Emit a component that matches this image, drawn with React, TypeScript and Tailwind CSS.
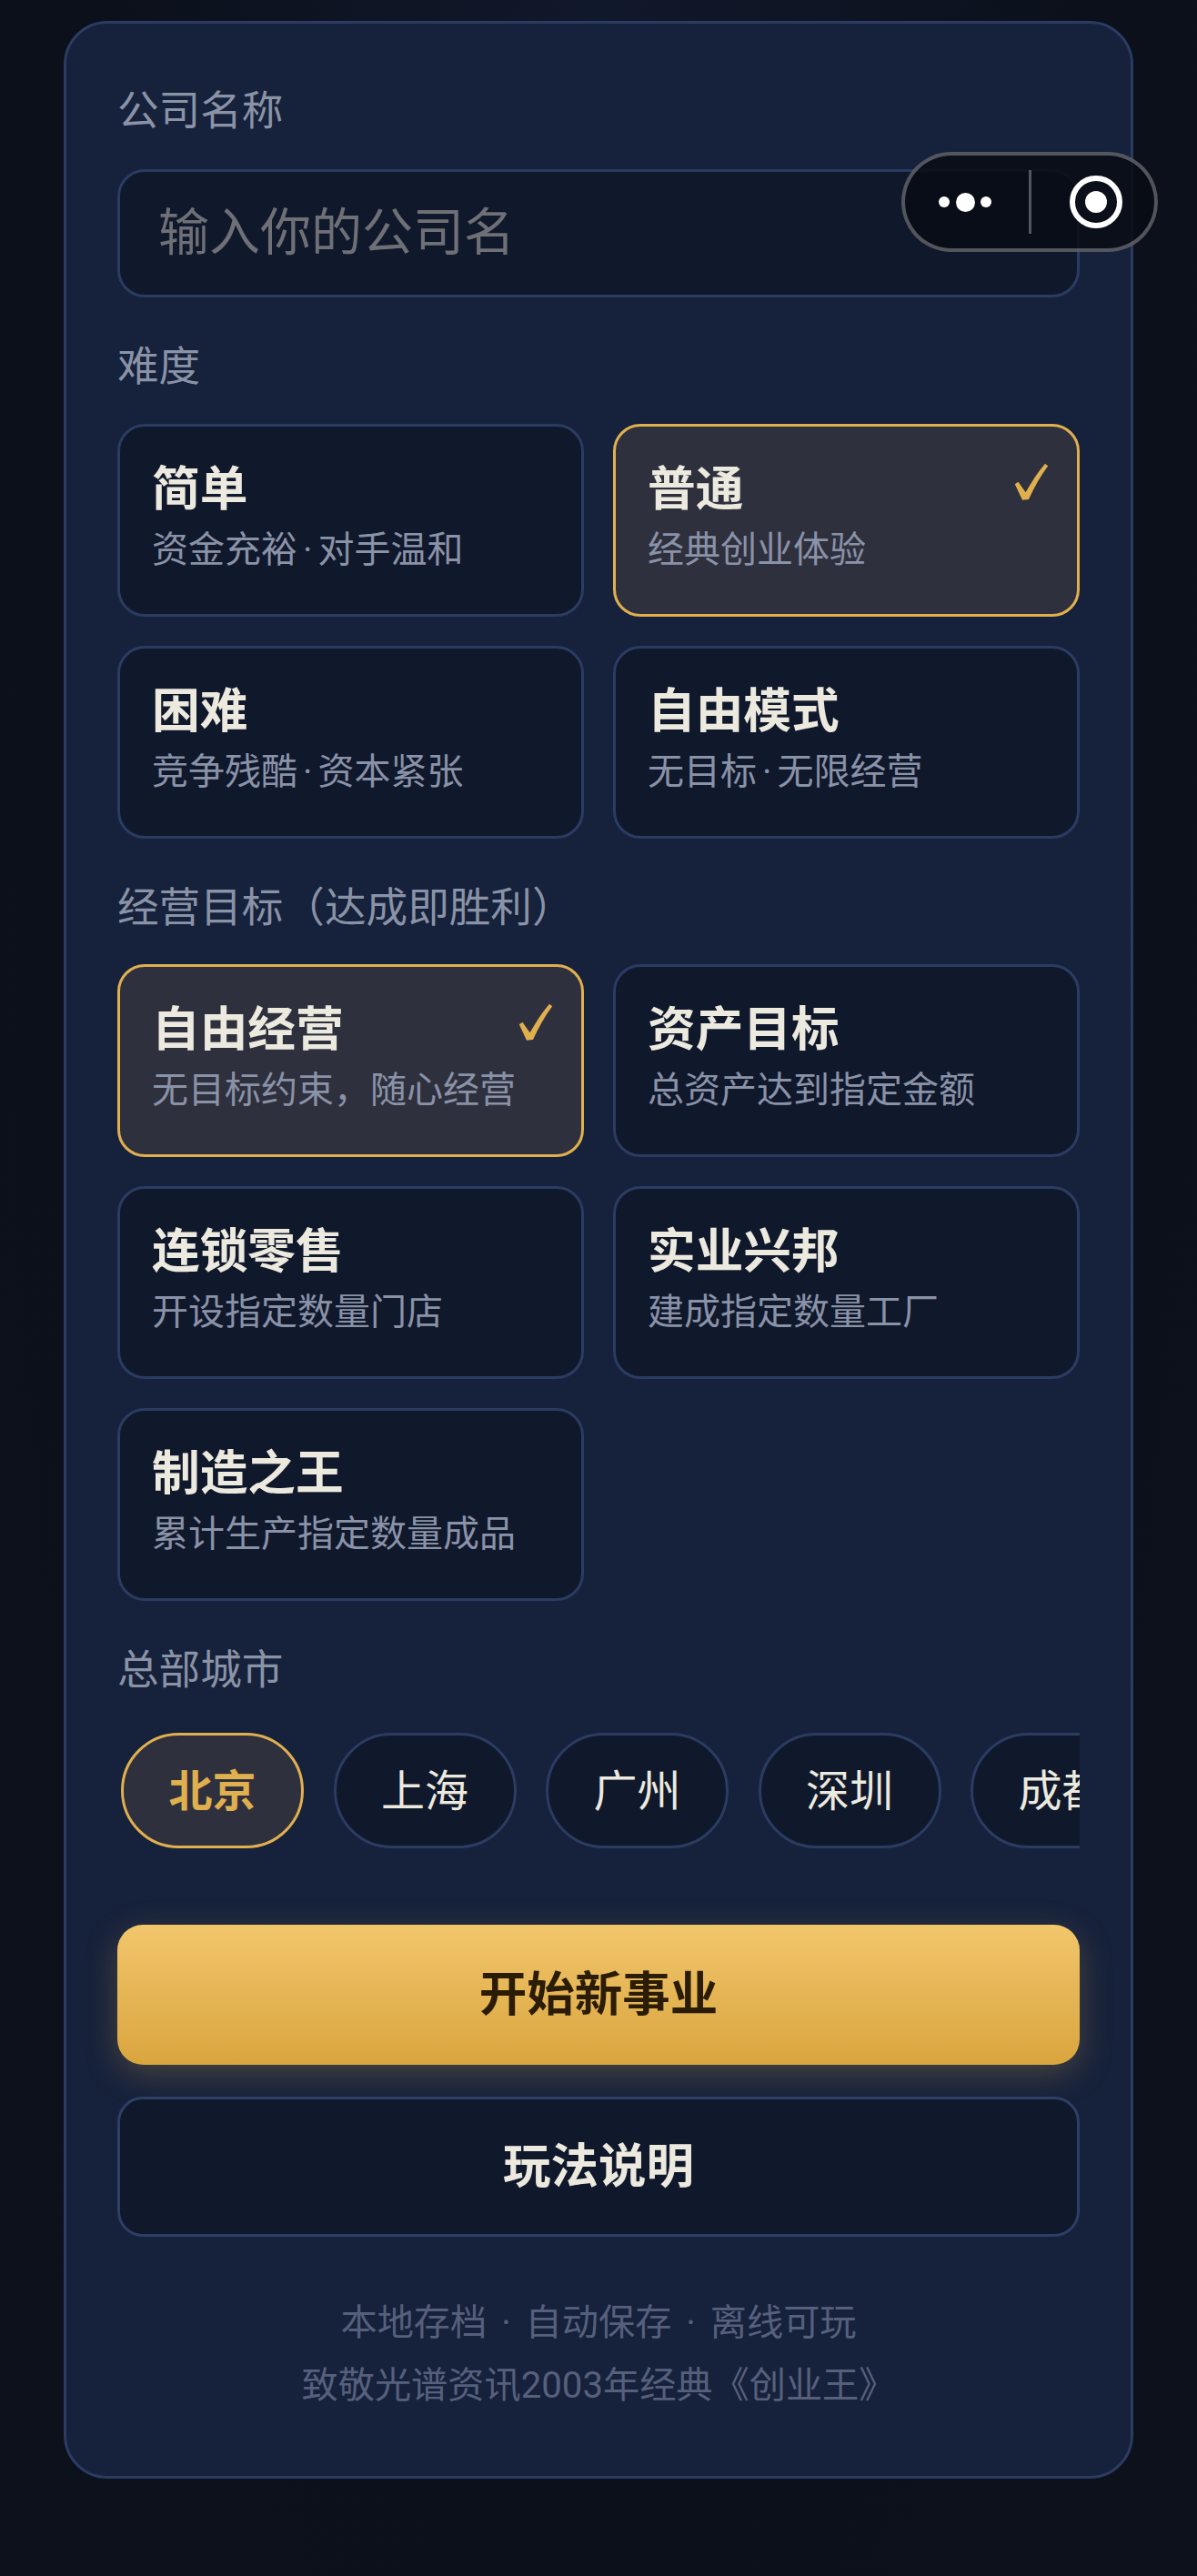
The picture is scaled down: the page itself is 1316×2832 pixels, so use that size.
const difficulties = [
  { name: '简单', desc: ['资金充裕', '对手温和'] },
  { name: '普通', desc: ['经典创业体验'], active: true },
  { name: '困难', desc: ['竞争残酷', '资本紧张'] },
  { name: '自由模式', desc: ['无目标', '无限经营'] },
];

const goals = [
  { name: '自由经营', desc: ['无目标约束，随心经营'], active: true },
  { name: '资产目标', desc: ['总资产达到指定金额'] },
  { name: '连锁零售', desc: ['开设指定数量门店'] },
  { name: '实业兴邦', desc: ['建成指定数量工厂'] },
  { name: '制造之王', desc: ['累计生产指定数量成品'] },
];

const cities = ['北京', '上海', '广州', '深圳', '成都'];

function Label({ children }: { children: React.ReactNode }) {
  return <div className="h-[60px] text-[45.6px] leading-[67px] text-[#8a93a6]">{children}</div>;
}

function OptionCard({ name, desc, active }: { name: string; desc: string[]; active?: boolean }) {
  return (
    <div
      className={`relative h-[212px] rounded-[30px] border-[3px] pl-[35px] pt-[34px] ${
        active ? 'border-[#e0b04f] bg-[#2f303d]' : 'border-[#2b3b62] bg-[#10182b]'
      }`}
    >
      <div className="h-[70px] text-[52.7px] font-bold leading-[70px] text-[#ece9df]">{name}</div>
      <div className="h-[64px] text-[40px] leading-[64px] text-[#8a92a8]">
        {desc[0]}
        {desc[1] && <span className="mx-[6px]">·</span>}
        {desc[1]}
      </div>
      {active && (
        <svg className="absolute right-[30px] top-[40px] h-[42px] w-[40px]" viewBox="0 0 40 42">
          <path
            d="M1.8 23.3 L5.4 20.7 L13.6 32.3 C20 21 27 10 35 .7 L38.2 3.3 C30 14 23 27 17 40 L10 40.7 Z"
            fill="#e0b04f"
          />
        </svg>
      )}
    </div>
  );
}

function CapsuleMenu() {
  return (
    <div className="absolute left-[991px] top-[167px] flex h-[110px] w-[282px] items-center rounded-full border-[4px] border-[#ffffff4d] bg-[#080c14d9]">
      <div className="mr-[4px] flex w-[132px] items-center justify-center gap-[6.5px]">
        <span className="h-[12px] w-[12px] rounded-full bg-white" />
        <span className="h-[21px] w-[21px] rounded-full bg-white" />
        <span className="h-[12px] w-[12px] rounded-full bg-white" />
      </div>
      <div className="h-[70px] w-[3px] bg-[#ffffff4d]" />
      <div className="flex flex-1 items-center justify-center pl-[6px]">
        <div className="flex h-[58px] w-[58px] items-center justify-center rounded-full border-[6px] border-white">
          <span className="h-[24px] w-[24px] rounded-full bg-white" />
        </div>
      </div>
    </div>
  );
}

export default function App() {
  return (
    <div className="relative h-[2832px] w-[1316px] overflow-hidden bg-[radial-gradient(ellipse_at_50%_0%,#10182b_0%,#0b101a_60%,#0c111c_100%)] pt-[23px] font-['Roboto','Noto_Sans_CJK_SC',sans-serif]">
      <div className="mx-[70px] h-[2702px] rounded-[48px] border-[3px] border-[#2b3b62] bg-[#16213b] px-[56px] pt-[63px]">
        <Label>公司名称</Label>
        <input
          className="mt-[37px] block h-[141px] w-full rounded-[30px] border-[3px] border-[#2b3b62] bg-[#10182b] pb-[2px] pl-[42px] text-[56px] text-[#ece9df] outline-none placeholder:text-[#6e7076]"
          placeholder="输入你的公司名"
        />

        <div className="mt-[43px]">
          <Label>难度</Label>
        </div>
        <div className="mt-[36px] grid grid-cols-2 gap-[32px]">
          {difficulties.map((d) => (
            <OptionCard key={d.name} {...d} />
          ))}
        </div>

        <div className="mt-[43px]">
          <Label>经营目标（达成即胜利）</Label>
        </div>
        <div className="mt-[35px] grid grid-cols-2 gap-[32px]">
          {goals.map((g) => (
            <OptionCard key={g.name} {...g} />
          ))}
        </div>

        <div className="mt-[43px]">
          <Label>总部城市</Label>
        </div>
        <div className="mt-[42px] flex gap-[32.5px] overflow-hidden pl-[4px]">
          {cities.map((city, i) => (
            <div
              key={city}
              className={`flex h-[127px] w-[201px] shrink-0 items-center justify-center rounded-full border-[3px] pt-[2px] text-[48px] ${
                i === 0
                  ? 'border-[#e0b04f] bg-[#2f303d] font-bold text-[#e0b04f]'
                  : 'border-[#2b3b62] bg-[#10182b] text-[#ece9df]'
              }`}
            >
              {city}
            </div>
          ))}
        </div>

        <button className="mt-[84px] flex h-[154px] w-full items-center justify-center rounded-[28px] bg-gradient-to-b from-[#f2c66b] to-[#d9a53d] text-[52.5px] font-bold text-[#2a1c05] shadow-[0_10px_36px_rgba(224,176,79,0.25)]">
          开始新事业
        </button>
        <button className="mt-[35px] flex h-[154px] w-full items-center justify-center rounded-[28px] border-[3px] border-[#2e3f66] bg-[#10182b] text-[52.5px] font-bold text-[#ece9df]">
          玩法说明
        </button>

        <div className="mt-[60px] text-center text-[40.2px] leading-[69px] text-[#56607c]">
          <div>
            本地存档 <span className="mx-[6px]">·</span> 自动保存 <span className="mx-[6px]">·</span> 离线可玩
          </div>
          <div>致敬光谱资讯2003年经典《创业王》</div>
        </div>
      </div>
      <CapsuleMenu />
    </div>
  );
}
